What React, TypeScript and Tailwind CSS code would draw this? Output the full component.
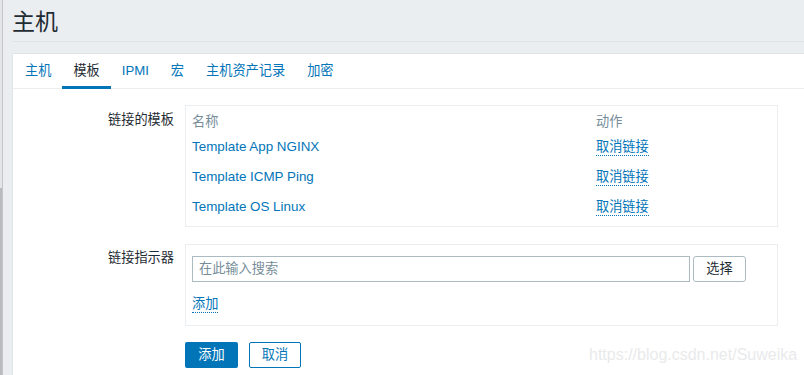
import React from "react";

const font = { fontFamily: '"Liberation Sans", Arial, "Noto Sans CJK SC", sans-serif' };

const tabs = ["主机", "模板", "IPMI", "宏", "主机资产记录", "加密"];
const templates = ["Template App NGINX", "Template ICMP Ping", "Template OS Linux"];

export default function App() {
  return (
    <div
      className="relative flex min-h-[375px] h-[375px] overflow-hidden bg-[#ebeef0] text-[#1f2c33] [font-family:'Liberation_Sans',Arial,'Noto_Sans_CJK_SC',sans-serif]"
    >
      <div className="flex w-[3px] flex-col">
        <div className="h-[188px] bg-[#e3e5e7] border-r border-[#c4c7c9]" />
        <div className="flex-1 bg-[#b8babc] border-r border-[#c4c7c9]" />
      </div>
      <div className="flex flex-1 flex-col pl-[9px]">
        <div className="flex h-[42px] items-center border-b border-[#dfe4e7] pt-[3px]">
          <h1 className="text-[23px] leading-[28px] font-normal">主机</h1>
        </div>
        <div className="mt-[11px] flex-1 border-l border-t border-[#dfe4e7] bg-white">
          <div className="flex border-b border-[#ebeef0] pl-[1px]">
            {tabs.map((t, i) => (
              <div
                key={t}
                className={
                  "-mb-px flex h-[35px] items-center border-b-[3px] px-[11px] pt-[2px] text-[13.2px] " +
                  (i === 1 ? "border-[#0275b8] text-[#1f2c33]" : "border-transparent text-[#0275b8]")
                }
              >
                {t}
              </div>
            ))}
          </div>
          <div className="pt-[16px] text-[13.2px]">
            <div className="flex">
              <div className="w-[172px] pr-[11px] pt-[7px] text-right leading-[15px]">链接的模板</div>
              <div className="w-[593px] border border-[#ebeef0] px-[6px] pt-[7px] pb-[5px]">
                <div className="flex h-[18px] items-center text-[#768d99]">
                  <div className="w-[404px]">名称</div>
                  <div>动作</div>
                </div>
                {templates.map((t) => (
                  <div key={t} className="flex h-[30px] items-center pt-[2px]">
                    <div className="w-[404px] text-[13.4px] text-[#0275b8]">{t}</div>
                    <div>
                      <span className="inline-block border-b border-dotted border-[#0275b8] pt-[1px] pb-[1px] leading-[15px] text-[#0275b8]">
                        取消链接
                      </span>
                    </div>
                  </div>
                ))}
              </div>
            </div>
            <div className="mt-[17px] flex">
              <div className="w-[172px] pr-[11px] pt-[6px] text-right leading-[15px]">链接指示器</div>
              <div className="w-[593px] border border-[#ebeef0] px-[6px] pt-[11px] pb-[11px]">
                <div className="flex items-center gap-[3px]">
                  <div className="flex h-[26px] w-[498px] items-center border border-[#acbbc2] px-[6px] text-[#768d99]">
                    在此输入搜索
                  </div>
                  <div className="flex h-[26px] w-[53px] items-center justify-center rounded-[3px] border border-[#acbbc2] bg-white text-[#1f2c33]">
                    选择
                  </div>
                </div>
                <div className="mt-[12px]">
                  <span className="inline-block border-b border-dotted border-[#0275b8] pt-[1px] leading-[16px] text-[#0275b8]">
                    添加
                  </span>
                </div>
              </div>
            </div>
            <div className="mt-[16px] flex">
              <div className="w-[172px]" />
              <div className="flex gap-[11px]">
                <div className="flex h-[26px] w-[53px] items-center justify-center rounded-[2px] bg-[#0275b8] text-white">
                  添加
                </div>
                <div className="flex h-[26px] w-[52px] items-center justify-center rounded-[2px] border border-[#0275b8] bg-white text-[#0275b8]">
                  取消
                </div>
              </div>
            </div>
          </div>
        </div>
      </div>
      <div
        className="pointer-events-none absolute left-[589px] top-[346px] text-[16px] leading-[18px] text-[#e9eaeb]"
        style={font}
      >
        https://blog.csdn.net/Suweika
      </div>
    </div>
  );
}
